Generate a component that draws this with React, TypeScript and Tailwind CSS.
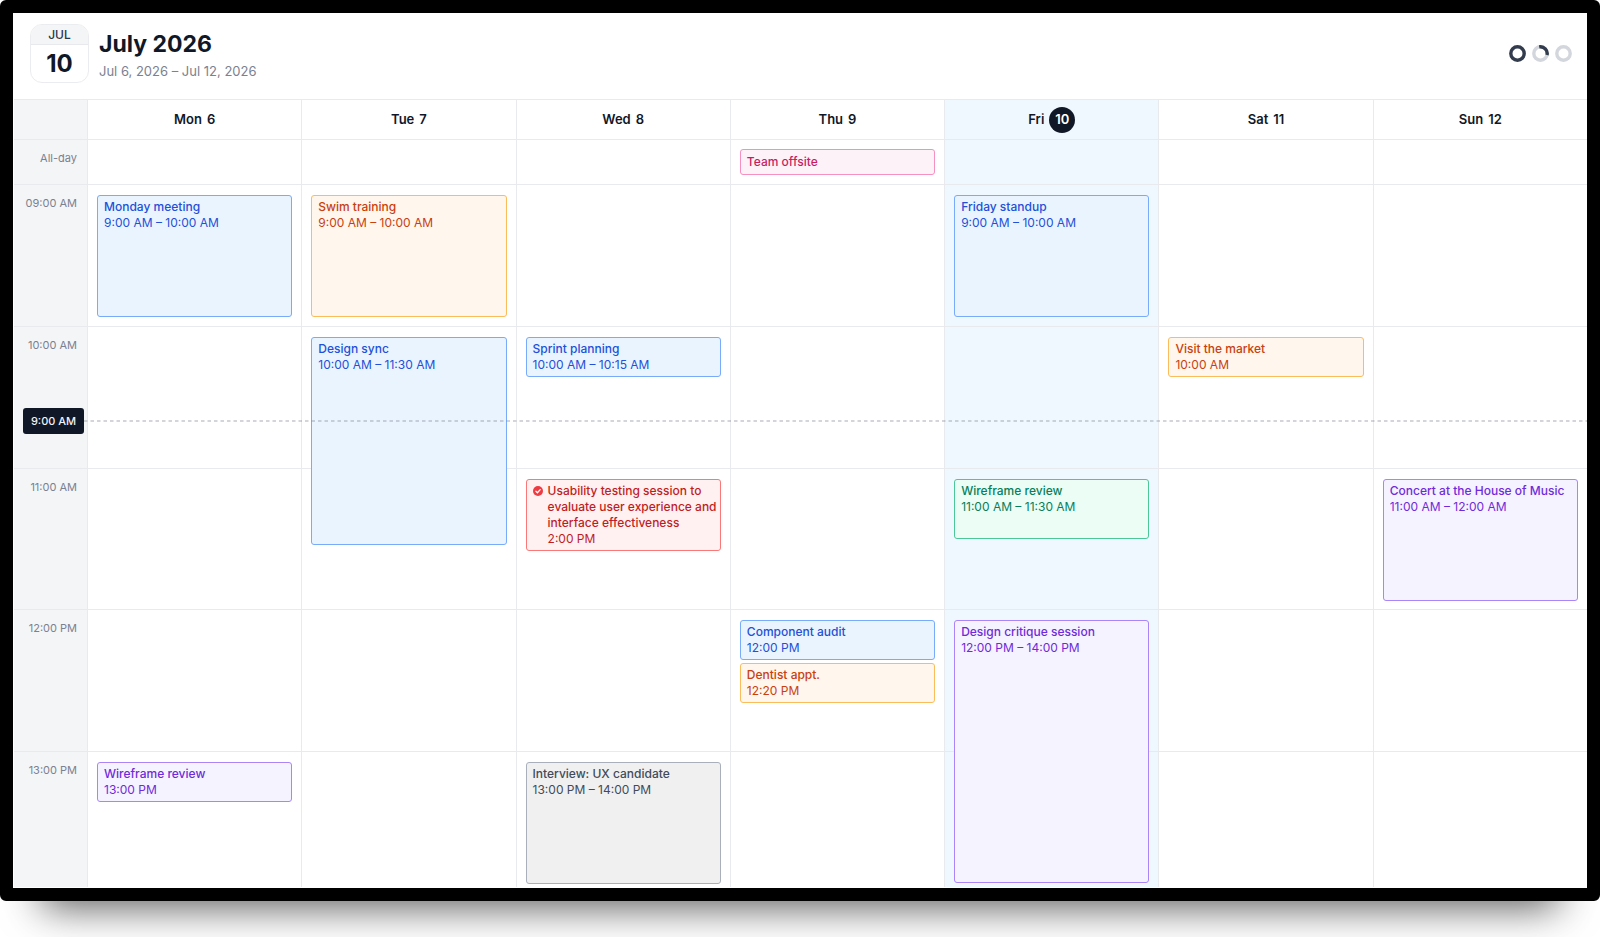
import React from 'react';

type Tone = 'blue' | 'orange' | 'pink' | 'red' | 'green' | 'purple' | 'gray';

interface CalendarEvent {
  title: string;
  time?: string;
  tone: Tone;
  size?: string;
  done?: boolean;
}

interface Day {
  label: string;
  date: number;
  today?: boolean;
}

const days: Day[] = [
  { label: 'Mon', date: 6 },
  { label: 'Tue', date: 7 },
  { label: 'Wed', date: 8 },
  { label: 'Thu', date: 9 },
  { label: 'Fri', date: 10, today: true },
  { label: 'Sat', date: 11 },
  { label: 'Sun', date: 12 },
];

const tones: Record<Tone, string> = {
  blue: 'border-[#78abfa] bg-[#eaf4ff] text-[#2250d8]',
  orange: 'border-[#fbbd5c] bg-[#fff6ed] text-[#c9400f]',
  pink: 'border-[#f590c0] bg-[#fdf2f8] text-[#c81e5f]',
  red: 'border-[#f97878] bg-[#fff1f2] text-[#bf1d24]',
  green: 'border-[#4cc79a] bg-[#ebfdf5] text-[#07805a]',
  purple: 'border-[#a985f7] bg-[#f5f3ff] text-[#6f2bd9]',
  gray: 'border-[#aab0bb] bg-[#f0f0f0] text-[#414b5a]',
};

const allDay: Record<number, CalendarEvent> = {
  9: { title: 'Team offsite', tone: 'pink' },
};

// events of each hour, keyed by the day of the month
const hours: { label: string; size: string; events: Record<number, CalendarEvent[]> }[] = [
  {
    label: '09:00 AM',
    size: 'h-[142px]',
    events: {
      6: [{ title: 'Monday meeting', time: '9:00 AM – 10:00 AM', tone: 'blue', size: 'h-[122px]' }],
      7: [{ title: 'Swim training', time: '9:00 AM – 10:00 AM', tone: 'orange', size: 'h-[122px]' }],
      10: [{ title: 'Friday standup', time: '9:00 AM – 10:00 AM', tone: 'blue', size: 'h-[122px]' }],
    },
  },
  {
    label: '10:00 AM',
    size: 'h-[142px]',
    events: {
      7: [{ title: 'Design sync', time: '10:00 AM – 11:30 AM', tone: 'blue', size: 'h-[208px]' }],
      8: [{ title: 'Sprint planning', time: '10:00 AM – 10:15 AM', tone: 'blue' }],
      11: [{ title: 'Visit the market', time: '10:00 AM', tone: 'orange' }],
    },
  },
  {
    label: '11:00 AM',
    size: 'h-[141px]',
    events: {
      8: [
        {
          title: 'Usability testing session to evaluate user experience and interface effectiveness',
          time: '2:00 PM',
          tone: 'red',
          done: true,
        },
      ],
      10: [{ title: 'Wireframe review', time: '11:00 AM – 11:30 AM', tone: 'green', size: 'h-[60px]' }],
      12: [{ title: 'Concert at the House of Music', time: '11:00 AM – 12:00 AM', tone: 'purple', size: 'h-[122px]' }],
    },
  },
  {
    label: '12:00 PM',
    size: 'h-[142px]',
    events: {
      9: [
        { title: 'Component audit', time: '12:00 PM', tone: 'blue' },
        { title: 'Dentist appt.', time: '12:20 PM', tone: 'orange' },
      ],
      10: [{ title: 'Design critique session', time: '12:00 PM – 14:00 PM', tone: 'purple', size: 'h-[263px]' }],
    },
  },
  {
    label: '13:00 PM',
    size: 'h-[136px]',
    events: {
      6: [{ title: 'Wireframe review', time: '13:00 PM', tone: 'purple' }],
      8: [{ title: 'Interview: UX candidate', time: '13:00 PM – 14:00 PM', tone: 'gray', size: 'h-[122px]' }],
    },
  },
];

const rowClass = 'grid grid-cols-[73px_repeat(7,minmax(0,1fr))]';

function CheckBadge() {
  return (
    <svg className="mt-[3px] h-[10px] w-[10px] shrink-0" viewBox="0 0 10 10" aria-hidden="true">
      <circle cx="5" cy="5" r="5" fill="#ee3a40" />
      <path d="M2.9 5.2 4.4 6.7 7.2 3.6" fill="none" stroke="#fff" strokeWidth="1.3" strokeLinecap="round" strokeLinejoin="round" />
    </svg>
  );
}

function EventCard({ event }: { event: CalendarEvent }) {
  return (
    <div className={`flex shrink-0 gap-[5px] rounded-[3px] border py-[3px] pr-[2px] pl-[6px] text-xs leading-4 ${tones[event.tone]} ${event.size ?? ''}`}>
      {event.done && <CheckBadge />}
      <div className="min-w-0">
        <div className="font-medium">{event.title}</div>
        {event.time && <div>{event.time}</div>}
      </div>
    </div>
  );
}

function StatusRing({ color, children }: { color: string; children?: React.ReactNode }) {
  return (
    <svg className="h-[17px] w-[17px]" viewBox="0 0 17 17" fill="none" aria-hidden="true">
      <circle cx="8.5" cy="8.5" r="6.7" stroke={color} strokeWidth="3.4" />
      {children}
    </svg>
  );
}

function Header() {
  return (
    <header className="flex h-[85px] items-start justify-between pr-[15px] pl-4">
      <div className="flex gap-[10px] pt-[10px]">
        <div className="flex h-[59px] w-[59px] flex-col overflow-hidden rounded-xl border border-[#ebecef] text-center">
          <div className="h-5 border-b border-[#e8e9ec] bg-[#f4f5f7] text-xs leading-5 font-medium text-[#2c3545]">JUL</div>
          <div className="text-2xl leading-[38px] font-bold text-[#101828]">10</div>
        </div>
        <div>
          <h1 className="pt-1 text-[23px] leading-8 font-bold text-[#101828]">July 2026</h1>
          <p className="text-[13px] leading-[22px] text-[#7b8190]">Jul 6, 2026 – Jul 12, 2026</p>
        </div>
      </div>
      <div className="flex gap-[6px] pt-[31px]">
        <StatusRing color="#323c4d" />
        <StatusRing color="#d3d6dc">
          <path d="M7.2 1.9A6.7 6.7 0 0 1 15 10" stroke="#323c4d" strokeWidth="3.4" />
        </StatusRing>
        <StatusRing color="#d3d6dc" />
      </div>
    </header>
  );
}

function Gutter({ children }: { children?: React.ReactNode }) {
  return (
    <div className="border-t border-[#e9eaed] bg-[#f4f5f7] pt-[9px] pr-[10px] text-right text-[11px] leading-[18px] text-[#7b8190]">
      {children}
    </div>
  );
}

function NowLine() {
  return (
    <div className="absolute top-[224px] right-0 left-0 z-20 flex items-center pl-[9px]">
      <time className="h-[26px] w-[61px] rounded-[3px] bg-[#101828] text-center text-[11px] leading-[26px] font-medium text-[#f2f3f5]">9:00 AM</time>
      <svg className="h-[2px] min-w-0 flex-1" aria-hidden="true">
        <line x1="0" y1="1" x2="100%" y2="1" stroke="#6b7280" strokeOpacity="0.4" strokeWidth="1.5" strokeDasharray="3.5 3" />
      </svg>
    </div>
  );
}

export default function App() {
  return (
    <div className="bg-white pb-9 font-['Inter',sans-serif]">
      <main className="rounded-md border-[13px] border-black bg-white py-px pl-px shadow-[0_48px_38px_-42px_rgba(0,0,0,0.65)]">
        <Header />

        <div className={rowClass}>
          <Gutter />
          {days.map((day) => (
            <div
              key={day.date}
              className={`flex h-10 items-center justify-center gap-[5px] border-t border-l border-[#e9eaed] text-[13px] font-semibold text-[#101828] ${
                day.today ? 'bg-[#f0f8ff]' : ''
              }`}
            >
              <span>{day.label}</span>
              {day.today ? (
                <span className="flex h-[26px] w-[26px] items-center justify-center rounded-full bg-[#101828] text-white">{day.date}</span>
              ) : (
                <span>{day.date}</span>
              )}
            </div>
          ))}
        </div>

        <div className={rowClass}>
          <Gutter>All-day</Gutter>
          {days.map((day) => (
            <div key={day.date} className={`h-[45px] border-t border-l border-[#e9eaed] p-[9px] ${day.today ? 'bg-[#f0f8ff]' : ''}`}>
              {allDay[day.date] && (
                <div className={`rounded-[3px] border px-[6px] text-xs leading-6 font-medium ${tones[allDay[day.date].tone]}`}>
                  {allDay[day.date].title}
                </div>
              )}
            </div>
          ))}
        </div>

        <div className="relative">
          {hours.map((hour) => (
            <div key={hour.label} className={`${rowClass} ${hour.size}`}>
              <Gutter>{hour.label}</Gutter>
              {days.map((day) => (
                <div
                  key={day.date}
                  className={`flex min-h-0 flex-col gap-[3px] border-t border-l border-[#e9eaed] px-[9px] pt-[10px] ${day.today ? 'bg-[#f0f8ff]' : ''} ${
                    hour.events[day.date] ? 'relative z-10' : ''
                  }`}
                >
                  {hour.events[day.date]?.map((event) => (
                    <EventCard key={event.title} event={event} />
                  ))}
                </div>
              ))}
            </div>
          ))}
          <NowLine />
        </div>
      </main>
    </div>
  );
}
